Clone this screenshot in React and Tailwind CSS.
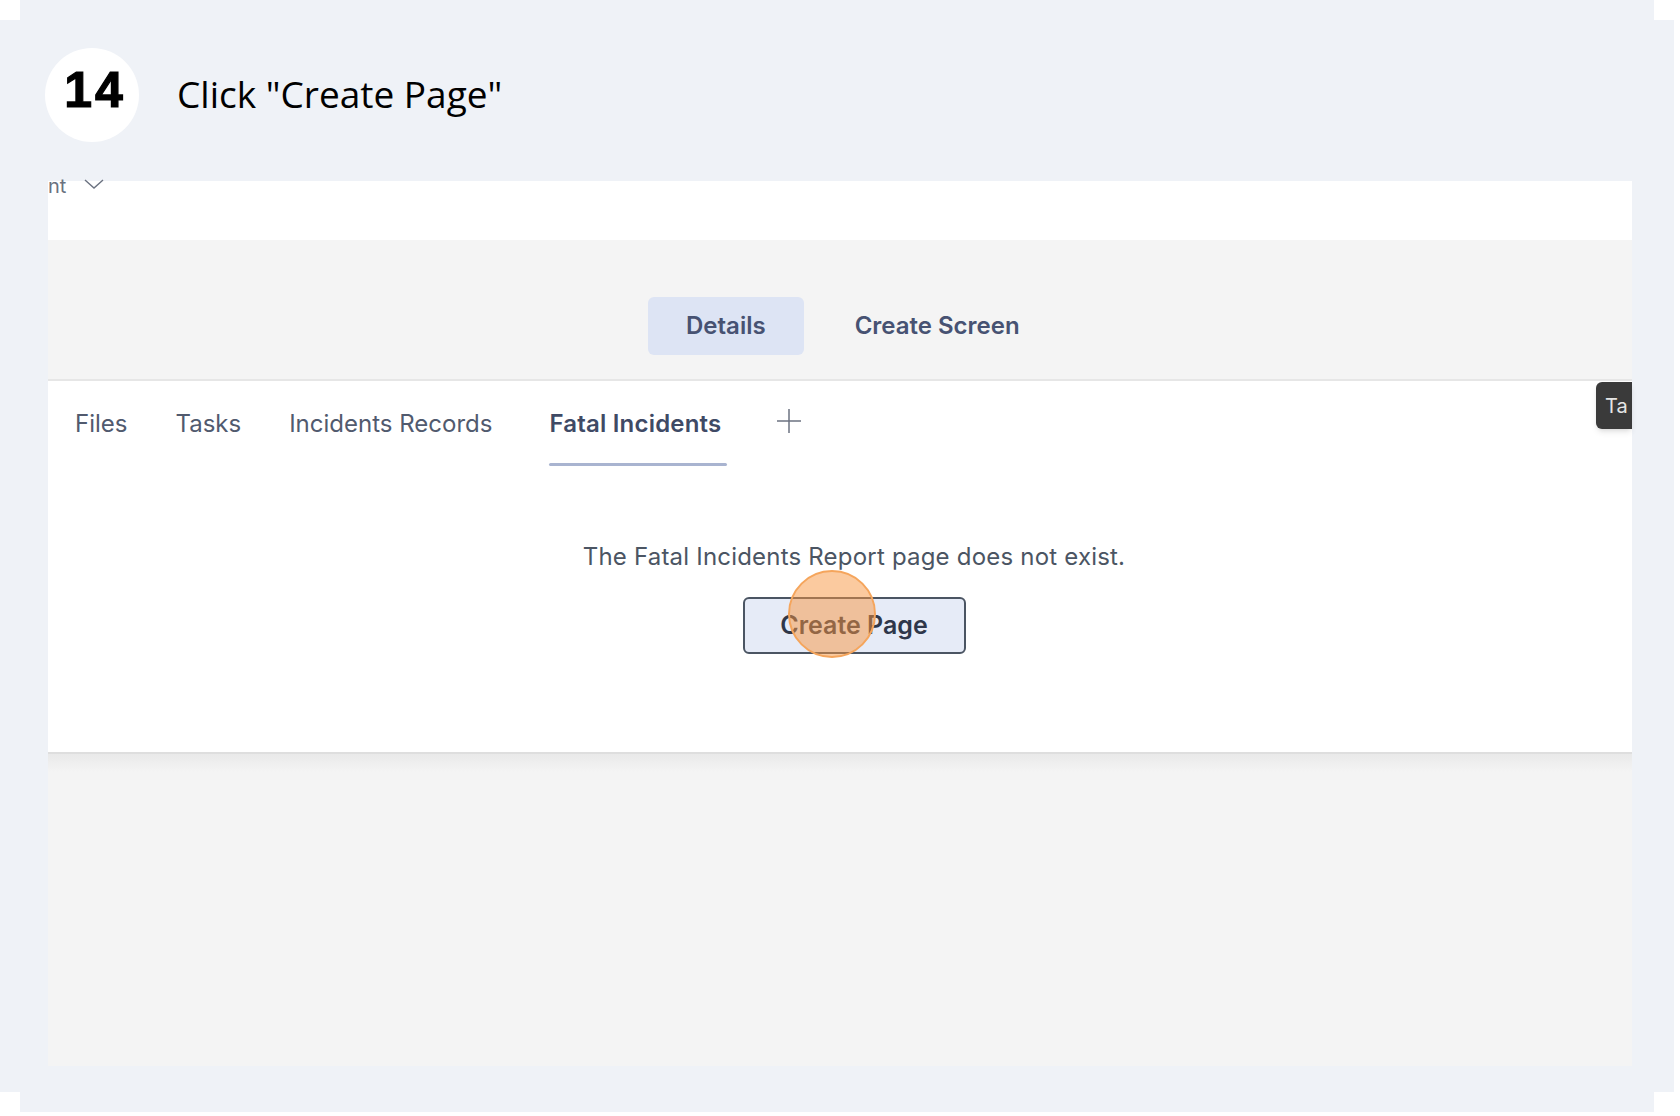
const tabs = ['Files', 'Tasks', 'Incidents Records']

export default function App() {
  return (
    <div className="w-[1680px] h-[1116px] bg-white overflow-hidden">
      <div className="ml-[20px] w-[1634px] h-[1112px] bg-[#eff2f7] py-[20px]">
        <div className="-mx-[20px] h-[1072px] bg-[#eff2f7] flex flex-col">
          {/* step header */}
          <div className="h-[161px] flex items-start pt-[28px] pl-[45px]">
            <div className="w-[94px] h-[94px] rounded-full bg-white flex items-center justify-center pb-[10px] pl-[6px]">
              <span className="font-['Liberation_Sans',Arial,sans-serif] font-bold text-[50px] tracking-[3px] leading-none text-black [-webkit-text-stroke:1.2px_black]">14</span>
            </div>
            <div className="ml-[38px] mt-[27px] font-['Open_Sans',sans-serif] text-[37px] leading-none text-black">
              Click "Create Page"
            </div>
          </div>

          {/* app screenshot */}
          <div className="ml-[48px] w-[1584px] h-[885px] flex flex-col font-['Inter',sans-serif]">
            <div className="h-[59px] bg-white">
              <div className="-mt-[5px] flex items-start gap-[18px] text-[20px] leading-none text-[#6b7280]">
                <span>nt</span>
                <svg width="20" height="11" viewBox="0 0 20 11" fill="none" className="mt-[3px]">
                  <polyline points="1,1 10,9 19,1" stroke="#6b7280" strokeWidth="1.4" />
                </svg>
              </div>
            </div>

            <div className="h-[141px] bg-[#f4f4f4] border-b-2 border-[#e6e6e6] flex items-start pt-[57px] pl-[600px] gap-[13px]">
              <button className="h-[58px] px-[38px] rounded-md bg-[#dde4f4] text-[24px] font-semibold text-[#475272]">
                Details
              </button>
              <button className="h-[58px] px-[38px] rounded-md text-[24px] font-semibold text-[#475272]">
                Create Screen
              </button>
            </div>

            <div className="relative h-[371px] bg-white flex flex-col">
              <div className="flex items-start pl-[27px] pt-[28px] gap-[48px]">
                {tabs.map((t) => (
                  <div key={t} className="text-[24px] leading-[30px] text-[#515a6e]">{t}</div>
                ))}
                <div className="flex flex-col ml-[9px]">
                  <div className="text-[24px] leading-[30px] font-semibold text-[#3f4a65] tracking-[0.2px] pr-[6px]">Fatal Incidents</div>
                  <div className="mt-[24px] h-[3px] rounded-full bg-[#a9b4d0]"></div>
                </div>
                <svg width="26" height="26" viewBox="0 0 26 26" fill="none" className="ml-[1px] -mt-[1px]">
                  <line x1="13" y1="1" x2="13" y2="25" stroke="#6b7280" strokeWidth="1.5" />
                  <line x1="1" y1="13" x2="25" y2="13" stroke="#6b7280" strokeWidth="1.5" />
                </svg>
              </div>

              <div className="mt-[76px] pl-[28px] flex flex-col items-center">
                <p className="text-[24px] tracking-[0.2px] leading-[30px] text-[#4b5563]">
                  The Fatal Incidents Report page does not exist.
                </p>
                <div className="relative mt-[25px]">
                  <button className="w-[223px] h-[57px] rounded-md border-2 border-[#4b5563] bg-[#e6ebf7] text-[25px] font-semibold text-[#2f374a]">
                    Create Page
                  </button>
                  <div className="absolute left-[45px] top-[-27px] w-[88px] h-[88px] rounded-full border-2 border-[#f5a55c] bg-[#f7953f]/50"></div>
                </div>
              </div>

              <div className="absolute right-0 top-[1px] w-[36px] h-[47px] rounded-l-md bg-[#3a3a3a] shadow-md overflow-hidden flex items-center pl-[9px]">
                <span className="text-[20px] text-[#e5e5e5] whitespace-nowrap">Ta</span>
              </div>
            </div>

            <div className="flex-1 flex flex-col bg-[#f4f4f4] border-t-2 border-[#dedede]">
              <div className="h-[18px] bg-gradient-to-b from-[#e9e9e9] to-[#f4f4f4]"></div>
            </div>
          </div>
        </div>
      </div>
    </div>
  )
}
